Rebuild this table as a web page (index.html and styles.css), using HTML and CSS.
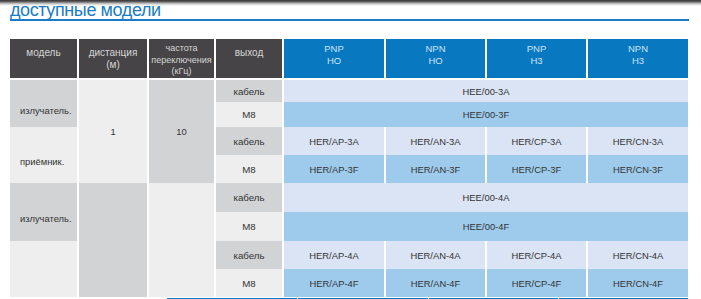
FILE: index.html
```html
<!DOCTYPE html>
<html lang="ru">
<head>
<meta charset="utf-8">
<title>доступные модели</title>
<link rel="stylesheet" href="styles.css">
</head>
<body>
<div class="topshade"></div>
<div class="page">
  <h1 class="title"><span class="title-text">доступные модели</span></h1>

  <div class="thead">
    <div class="th dark one">модель</div>
    <div class="th dark">дистанция<br>(м)</div>
    <div class="th dark three">частота<br>переключения<br>(кГц)</div>
    <div class="th dark one">выход</div>
    <div class="th blue">PNP<br>HO</div>
    <div class="th blue">NPN<br>HO</div>
    <div class="th blue">PNP<br>H3</div>
    <div class="th blue">NPN<br>H3</div>
  </div>

  <div class="tbody">
    <!-- row 1 -->
    <div class="td g r2 model">излучатель.</div>
    <div class="td l r4">1</div>
    <div class="td g r4">10</div>
    <div class="td g out">кабель</div>
    <div class="td lav c4">HEE/00-3A</div>
    <!-- row 2 -->
    <div class="td l out">M8</div>
    <div class="td blu c4">HEE/00-3F</div>
    <!-- row 3 -->
    <div class="td l r2 model">приёмник.</div>
    <div class="td g out">кабель</div>
    <div class="td lav">HER/AP-3A</div>
    <div class="td lav">HER/AN-3A</div>
    <div class="td lav">HER/CP-3A</div>
    <div class="td lav">HER/CN-3A</div>
    <!-- row 4 -->
    <div class="td l out">M8</div>
    <div class="td blu">HER/AP-3F</div>
    <div class="td blu">HER/AN-3F</div>
    <div class="td blu">HER/CP-3F</div>
    <div class="td blu">HER/CN-3F</div>
    <!-- row 5 -->
    <div class="td g r2 model">излучатель.</div>
    <div class="td g r4"></div>
    <div class="td l r4"></div>
    <div class="td g out">кабель</div>
    <div class="td lav c4">HEE/00-4A</div>
    <!-- row 6 -->
    <div class="td l out">M8</div>
    <div class="td blu c4">HEE/00-4F</div>
    <!-- row 7 -->
    <div class="td l r2 model"></div>
    <div class="td g out">кабель</div>
    <div class="td lav">HER/AP-4A</div>
    <div class="td lav">HER/AN-4A</div>
    <div class="td lav">HER/CP-4A</div>
    <div class="td lav">HER/CN-4A</div>
    <!-- row 8 -->
    <div class="td l out">M8</div>
    <div class="td blu">HER/AP-4F</div>
    <div class="td blu">HER/AN-4F</div>
    <div class="td blu">HER/CP-4F</div>
    <div class="td blu">HER/CN-4F</div>
  </div>

  <div class="nextbar">
    <div class="seg s1"></div>
    <div class="seg s2"></div>
    <div class="seg s3"></div>
    <div class="seg s4"></div>
  </div>
</div>
</body>
</html>
```

FILE: styles.css
```css
html, body {
  margin: 0;
  padding: 0;
  background: #ffffff;
}

body {
  font-family: "Liberation Sans", Arial, sans-serif;
  color: #333333;
  width: 701px;
  height: 299px;
  overflow: hidden;
  position: relative;
}

.topshade {
  position: absolute;
  left: 0;
  top: 0;
  width: 701px;
  height: 6px;
  background: linear-gradient(to bottom, #333333 0%, #5a5a5a 25%, #cfcfcf 65%, rgba(255,255,255,0) 100%);
}

.page {
  padding-left: 10px;
}

.title {
  margin: 1px 0 0 0;
  width: 679px;
  height: 18px;
  font-size: 18px;
  line-height: 18px;
  font-weight: normal;
  letter-spacing: -0.4px;
  color: #1a7cc5;
  border-bottom: 2px solid #1a7cc5;
}

.title-text {
  display: inline-block;
}

.thead {
  margin-top: 18px;
  display: grid;
  grid-template-columns: 67px 68px 65px 66px 100px 99px 99px 100px;
  column-gap: 2px;
  height: 39px;
}

.th {
  text-align: center;
  font-size: 10px;
  line-height: 12px;
  padding-top: 8px;
  box-sizing: border-box;
}

.th.dark {
  background: #464446;
  color: #d6d6d6;
}

.th.three {
  padding-top: 4px;
  font-size: 9px;
  line-height: 11.5px;
}

.th.blue {
  background: #0878c1;
  color: #cfe4f6;
  font-size: 9.5px;
  padding-top: 4px;
}

.tbody {
  margin-top: 2px;
  display: grid;
  grid-template-columns: 67px 68px 65px 66px 100px 99px 99px 100px;
  grid-template-rows: 22px 25px 28px 28px 29px 29px 28px 28px;
  column-gap: 2px;
}

.td {
  display: flex;
  align-items: center;
  justify-content: center;
  font-size: 9.4px;
  color: #333333;
}

.td.out {
  font-size: 9.7px;
}

.td.model {
  justify-content: flex-start;
  padding-left: 10px;
  padding-top: 13px;
  box-sizing: border-box;
}

.r2 { grid-row: span 2; }
.r4 { grid-row: span 4; }
.c4 { grid-column: span 4; }

.g { background: #d2d3d5; }
.l { background: #eeeeee; }
.lav { background: #dbe4f4; }
.blu { background: #9ecbec; }

.nextbar {
  margin-top: 1px;
  margin-left: 157px;
  display: flex;
  gap: 1px;
  height: 4px;
}

.seg {
  background: #0878c1;
}

.s1 { width: 130px; }
.s2 { width: 130px; }
.s3 { width: 129px; }
.s4 { width: 129px; }
```
